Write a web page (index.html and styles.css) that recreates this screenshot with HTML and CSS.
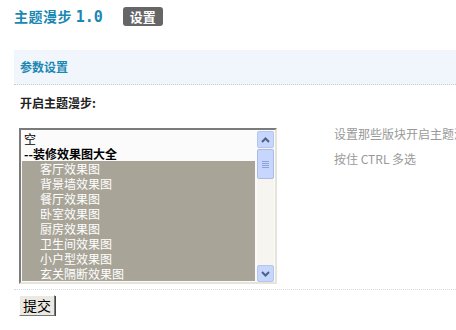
FILE: index.html
```html
<!DOCTYPE html>
<html lang="zh-CN">
<head>
    <meta charset="UTF-8">
    <title>主题漫步 1.0</title>
    <link rel="stylesheet" href="styles.css">
</head>
<body>
    <div class="page">
        <div class="title-row">
            <h1 class="title">主题漫步 <span class="version">1.0</span></h1>
            <span class="badge">设置</span>
        </div>

        <div class="section-bar">参数设置</div>

        <div class="field-label">开启主题漫步:</div>

        <div class="field-row">
            <div class="listbox">
                <div class="options">
                    <div class="opt">空</div>
                    <div class="opt group">--装修效果图大全</div>
                    <div class="opt sub selected">客厅效果图</div>
                    <div class="opt sub selected">背景墙效果图</div>
                    <div class="opt sub selected">餐厅效果图</div>
                    <div class="opt sub selected">卧室效果图</div>
                    <div class="opt sub selected">厨房效果图</div>
                    <div class="opt sub selected">卫生间效果图</div>
                    <div class="opt sub selected">小户型效果图</div>
                    <div class="opt sub selected">玄关隔断效果图</div>
                </div>
                <!-- XP 风格滚动条 -->
                <div class="scrollbar">
                    <div class="sb-btn">
                        <svg width="9" height="6" viewBox="0 0 9 6"><path d="M1 5 L4.5 1.5 L8 5" fill="none" stroke="#4d6185" stroke-width="2"/></svg>
                    </div>
                    <div class="sb-thumb">
                        <span></span><span></span><span></span><span></span>
                    </div>
                    <div class="sb-track"></div>
                    <div class="sb-btn">
                        <svg width="9" height="6" viewBox="0 0 9 6"><path d="M1 1 L4.5 4.5 L8 1" fill="none" stroke="#4d6185" stroke-width="2"/></svg>
                    </div>
                </div>
            </div>
            <div class="help">
                设置那些版块开启主题漫步<br>
                按住 CTRL 多选
            </div>
        </div>

        <div class="divider"></div>

        <button class="submit">提交</button>
    </div>
</body>
</html>
```

FILE: styles.css
```css
html, body {
    margin: 0;
    overflow: hidden;
    background: #fff;
}

body {
    font-family: "Noto Sans CJK SC", "Liberation Sans", sans-serif;
    font-size: 12px;
    color: #333;
}

.page {
    padding: 5px 0 0 14px;
    width: 520px;
}

.title-row {
    display: flex;
    align-items: center;
    height: 22px;
}

.title {
    margin: 0;
    font-size: 14px;
    font-weight: bold;
    color: #1b87b3;
    font-family: "Noto Sans CJK SC", "Liberation Sans", sans-serif;
    letter-spacing: 0.5px;
}

.version {
    font-family: "DejaVu Sans Mono", monospace;
    font-size: 15px;
    letter-spacing: 0;
}

.badge {
    margin-left: 20px;
    background: #666;
    color: #fff;
    font-weight: bold;
    font-size: 13px;
    line-height: 19px;
    padding: 0 7px;
    border-radius: 3px;
}

.section-bar {
    margin-top: 23px;
    height: 34px;
    line-height: 34px;
    padding-left: 6px;
    background: #f0f6fc;
    border-bottom: 1px dotted #c8cdd2;
    color: #1b87b3;
    font-weight: bold;
}

.field-label {
    margin-top: 8px;
    padding-left: 6px;
    height: 20px;
    line-height: 20px;
    font-weight: bold;
    color: #222;
}

.field-row {
    display: flex;
    margin-top: 15px;
    padding-left: 5px;
}

.listbox {
    display: flex;
    width: 252px;
    height: 151px;
    border-top: 2px solid #7b7b7b;
    border-left: 2px solid #7b7b7b;
    border-right: 2px solid #e6e3da;
    border-bottom: 2px solid #e6e3da;
    background: #fbfbfb;
    padding: 1px 1px 0 1px;
}

.options {
    flex: 1;
    padding-right: 2px;
}

.opt {
    height: 15px;
    line-height: 15px;
    padding-left: 2px;
    color: #000;
    white-space: nowrap;
}

.opt.group {
    font-weight: bold;
}

.opt.sub {
    padding-left: 18px;
}

.opt.selected {
    background: #a8a598;
    color: #fff;
}

.scrollbar {
    width: 17px;
    display: flex;
    flex-direction: column;
    background: #f6f5ef;
}

.sb-btn {
    height: 15px;
    display: flex;
    align-items: center;
    justify-content: center;
    background: #c6d6fc;
    border: 1px solid #b4c5ee;
    border-radius: 2px;
}

.sb-thumb {
    height: 28px;
    margin-top: 1px;
    display: flex;
    flex-direction: column;
    align-items: center;
    justify-content: center;
    gap: 1px;
    background: #c6d6fc;
    border: 1px solid #a9bbe6;
    border-radius: 2px;
}

.sb-thumb span {
    width: 7px;
    height: 1px;
    background: #8da3d8;
}

.sb-track {
    flex: 1;
}

.help {
    margin-left: 57px;
    margin-top: -7px;
    line-height: 25px;
    color: #999;
    white-space: nowrap;
}

.divider {
    margin-top: 5px;
    border-top: 1px dotted #d6dbe0;
}

.submit {
    margin: 5px 0 0 5px;
    font-family: "Noto Sans CJK SC", sans-serif;
    font-size: 14px;
    line-height: 17px;
    padding: 1px 3px;
    color: #000;
    background: #ece9e2;
    border: 1px solid;
    border-color: #fff #777 #777 #fff;
    box-shadow: 1px 1px 0 #444;
}
```
